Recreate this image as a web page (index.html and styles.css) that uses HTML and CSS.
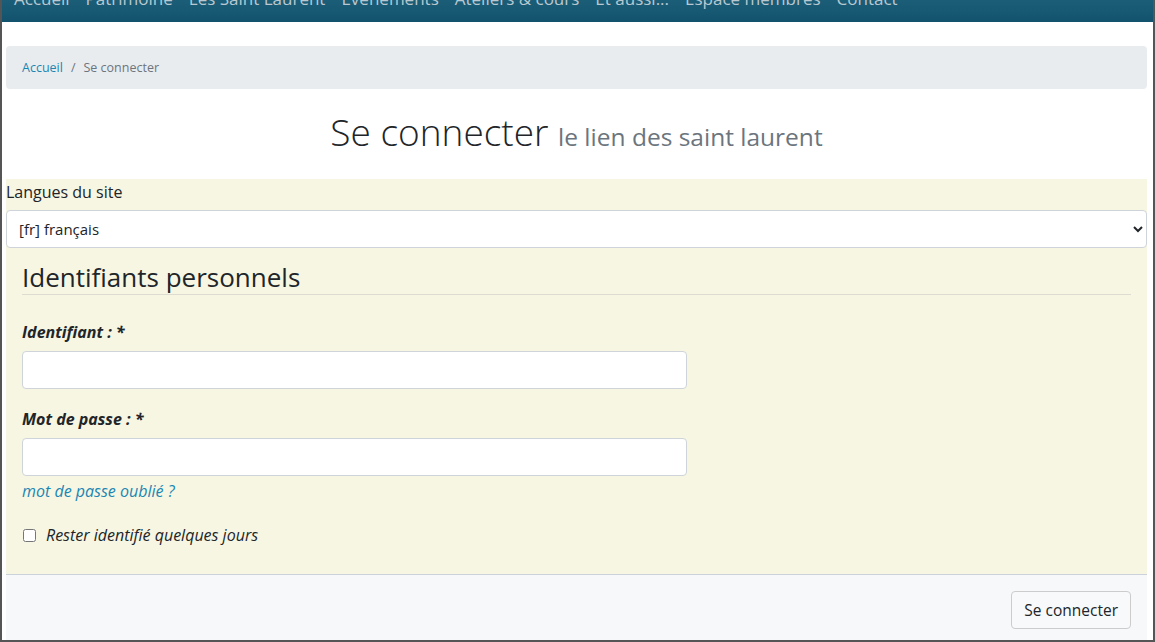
FILE: index.html
```html
<!DOCTYPE html>
<html lang="fr">
<head>
  <meta charset="UTF-8" />
  <meta name="viewport" content="width=device-width, initial-scale=1.0"/>
  <title>Se connecter - le lien des saint laurent</title>
  <link rel="stylesheet" href="styles.css">
</head>
<body>
<div class="frame">

  <!-- Top navigation (page is scrolled a little) -->
  <nav class="topnav">
    <ul>
      <li><a href="#">Accueil</a></li>
      <li><a href="#">Patrimoine</a></li>
      <li><a href="#">Les Saint Laurent</a></li>
      <li><a href="#">Evénements</a></li>
      <li><a href="#">Ateliers &amp; cours</a></li>
      <li><a href="#">Et aussi...</a></li>
      <li><a href="#">Espace membres</a></li>
      <li><a href="#">Contact</a></li>
    </ul>
  </nav>

  <div class="container">

    <ol class="breadcrumb">
      <li><a href="#">Accueil</a></li>
      <li class="sep">/</li>
      <li class="active">Se connecter</li>
    </ol>

    <h1 class="page-title">Se connecter <small>le lien des saint laurent</small></h1>

    <form class="login">
      <div class="form-body">
        <label class="lang-label" for="lang">Langues du site</label>
        <select id="lang" class="form-select">
          <option>[fr] français</option>
        </select>

        <fieldset>
          <legend>Identifiants personnels</legend>

          <div class="field">
            <label for="login">Identifiant : *</label>
            <input type="text" id="login" class="form-control">
          </div>

          <div class="field">
            <label for="pass">Mot de passe : *</label>
            <input type="password" id="pass" class="form-control">
            <a href="#" class="forgot">mot de passe oublié ?</a>
          </div>

          <div class="check">
            <input type="checkbox" id="remember">
            <label for="remember">Rester identifié quelques jours</label>
          </div>
        </fieldset>
      </div>

      <div class="form-footer">
        <button type="submit">Se connecter</button>
      </div>
    </form>

  </div>
</div>
</body>
</html>
```

FILE: styles.css
```css
html, body {
  margin: 0;
  height: 100%;
}

body {
  font-family: "Open Sans", "Noto Sans", sans-serif;
  color: #212529;
  background: #fff;
}

.frame {
  box-sizing: border-box;
  height: 642px;
  border: 2px solid #555;
  border-top: none;
  overflow: hidden;
}

/* Navigation */
.topnav {
  height: 22px;
  overflow: hidden;
  background: linear-gradient(#1b5e78, #13526d);
}

.topnav ul {
  list-style: none;
  margin: -13px 0 0 0;
  padding: 0 0 0 12px;
  display: flex;
  gap: 16px;
}

.topnav a {
  color: #b9c8d0;
  text-decoration: none;
  font-size: 17px;
  line-height: 24px;
}

.container {
  padding: 0 6px 0 4px;
}

/* Breadcrumb */
.breadcrumb {
  list-style: none;
  margin: 24px 0 0 0;
  padding: 0 16px;
  height: 43px;
  display: flex;
  align-items: center;
  gap: 8px;
  background: #e9ecef;
  border-radius: 4px;
  font-size: 12.5px;
  color: #6c757d;
}

.breadcrumb a {
  color: #1a86b3;
  text-decoration: none;
}

/* Title */
.page-title {
  margin: 18px 0 17px 0;
  text-align: center;
  font-weight: 300;
  font-size: 37px;
  line-height: 50px;
  color: #212529;
}

.page-title small {
  font-size: 24.5px;
  font-weight: 400;
  color: #6c757d;
}

/* Form */
.form-body {
  background: #f7f6e3;
  padding: 1px 0 28px 0;
}

.lang-label {
  display: block;
  font-size: 16px;
  margin: 1px 0 7px 0;
}

.form-select {
  display: block;
  width: 100%;
  height: 38px;
  padding: 0 8px;
  font-family: inherit;
  font-size: 15px;
  color: #212529;
  background: #fff;
  border: 1px solid #ced4da;
  border-radius: 4px;
}

fieldset {
  border: none;
  margin: 0;
  padding: 0 16px;
}

legend {
  display: block;
  width: 100%;
  padding: 12px 0 0 0;
  margin: 0;
  font-size: 26px;
  line-height: 34px;
  border-bottom: 1px solid #dcdcd0;
}

.field {
  margin-top: 26px;
}

.field label {
  display: block;
  font-weight: 700;
  font-style: italic;
  font-size: 16px;
  line-height: 22px;
  margin-bottom: 8px;
}

.form-control {
  box-sizing: border-box;
  display: block;
  width: 665px;
  height: 38px;
  background: #fff;
  border: 1px solid #ced4da;
  border-radius: 4px;
}

.field + .field {
  margin-top: 19px;
}

.forgot {
  display: block;
  margin-top: 4px;
  font-style: italic;
  font-size: 16px;
  color: #1a86b3;
  text-decoration: none;
}

.check {
  margin-top: 22px;
  display: flex;
  align-items: center;
  gap: 10px;
  font-style: italic;
  font-size: 16px;
}

.check input {
  margin: 0 0 0 1px;
  width: 13px;
  height: 13px;
}

.form-footer {
  background: #f7f8fa;
  border-top: 1px solid #ccd2da;
  height: 66px;
  display: flex;
  align-items: center;
  justify-content: flex-end;
  padding: 4px 16px 0 0;
  box-sizing: border-box;
}

button {
  font-family: inherit;
  font-size: 15.5px;
  padding: 0 12px;
  height: 38px;
  color: #212529;
  background: #f8f9fa;
  border: 1px solid #ccc;
  border-radius: 4px;
}
```
